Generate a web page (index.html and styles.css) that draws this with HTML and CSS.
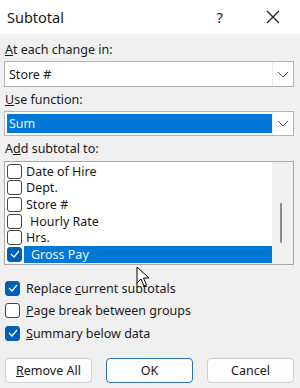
FILE: index.html
```html
<!doctype html>
<html lang="en">
  <head>
    <meta charset="UTF-8" />
    <title>Subtotal</title>
    <link rel="stylesheet" href="styles.css">
  </head>
  <body>
    <div class="dialog">
      <div class="titlebar">
        <span class="title">Subtotal</span>
        <span class="help">?</span>
        <svg class="close" width="14" height="14" viewBox="0 0 14 14">
          <path d="M1 1 L13 13 M13 1 L1 13" stroke="#222" stroke-width="1.3" fill="none" />
        </svg>
      </div>

      <div class="content">
        <div class="label first"><u>A</u>t each change in:</div>
        <div class="combo combo-one">
          <span class="combo-text">Store #</span>
          <span class="arrow">
            <svg width="12" height="7" viewBox="0 0 12 7"><path d="M1 1 L6 6 L11 1" stroke="#555" stroke-width="1" fill="none" /></svg>
          </span>
        </div>

        <div class="label"><u>U</u>se function:</div>
        <div class="combo combo-two">
          <span class="combo-text selected">Sum</span>
          <span class="arrow">
            <svg width="12" height="7" viewBox="0 0 12 7"><path d="M1 1 L6 6 L11 1" stroke="#555" stroke-width="1" fill="none" /></svg>
          </span>
        </div>

        <div class="label">A<u>d</u>d subtotal to:</div>
        <div class="listbox">
          <div class="items">
            <div class="item"><span class="box"></span><span>Date of Hire</span></div>
            <div class="item"><span class="box"></span><span>Dept.</span></div>
            <div class="item"><span class="box"></span><span>Store #</span></div>
            <div class="item"><span class="box"></span><span class="pad">Hourly Rate</span></div>
            <div class="item"><span class="box"></span><span>Hrs.</span></div>
            <div class="item active">
              <span class="box checked">
                <svg width="10" height="8" viewBox="0 0 10 8"><path d="M1 4 L4 7 L9 1" stroke="#fff" stroke-width="1.2" fill="none" /></svg>
              </span>
              <span class="sel">Gross Pay</span>
            </div>
          </div>
          <div class="scroll"><div class="thumb"></div></div>
        </div>

        <div class="checks">
          <div class="check">
            <span class="box checked">
              <svg width="10" height="8" viewBox="0 0 10 8"><path d="M1 4 L4 7 L9 1" stroke="#fff" stroke-width="1.2" fill="none" /></svg>
            </span>
            <span>Replace <u>c</u>urrent subtotals</span>
          </div>
          <div class="check">
            <span class="box"></span>
            <span><u>P</u>age break between groups</span>
          </div>
          <div class="check">
            <span class="box checked">
              <svg width="10" height="8" viewBox="0 0 10 8"><path d="M1 4 L4 7 L9 1" stroke="#fff" stroke-width="1.2" fill="none" /></svg>
            </span>
            <span><u>S</u>ummary below data</span>
          </div>
        </div>

        <div class="buttons">
          <button class="btn"><u>R</u>emove All</button>
          <button class="btn default">OK</button>
          <button class="btn">Cancel</button>
        </div>
      </div>

      <svg class="cursor" width="14" height="21" viewBox="0 0 14 21">
        <path d="M1 1 L1 17 L5 13 L8 20 L10.5 19 L7.5 12 L13 12 Z" fill="#fff" stroke="#000" stroke-width="1" stroke-linejoin="round" />
      </svg>
    </div>
  </body>
</html>
```

FILE: styles.css
```css
body {
  margin: 0;
  font-family: "Noto Sans", "Open Sans", Arial, sans-serif;
  font-size: 12.5px;
  color: #1a1a1a;
  background: #f0f0f0;
}
.dialog {
  position: relative;
  width: 300px;
  height: 388px;
  background: #f0f0f0;
  overflow: hidden;
}
.titlebar {
  height: 34px;
  background: #fff;
  display: flex;
  align-items: center;
  padding: 0 0 0 7px;
}
.title {
  font-size: 14.5px;
  flex: 1;
}
.help {
  font-size: 15px;
  margin-right: 43px;
}
.close {
  margin-right: 20px;
}
.content {
  padding: 0 6px 0 4px;
}
.label {
  height: 16px;
  line-height: 16px;
  margin-top: 5px;
  padding-left: 1px;
}
.label.first {
  margin-top: 8px;
}
.combo {
  display: flex;
  align-items: stretch;
  background: #fff;
  border: 1px solid #b4b4b4;
  margin-top: 3px;
}
.combo-one {
  height: 24px;
}
.combo-two {
  height: 23px;
}
.combo-text {
  flex: 1;
  display: flex;
  align-items: center;
  padding-left: 4px;
}
.combo-two .combo-text {
  margin: 2px 0 2px 2px;
  padding-left: 2px;
}
.selected {
  background: #0078d7;
  color: #e8f4ff;
}
.arrow {
  width: 20px;
  border-left: 1px solid #ececec;
  display: flex;
  align-items: center;
  justify-content: center;
}
.listbox {
  display: flex;
  height: 102px;
  margin-top: 4px;
  background: #fff;
  border: 1px solid #a8a8a8;
}
.items {
  flex: 1;
  padding: 1px 0 0 2px;
}
.item {
  display: flex;
  align-items: center;
  height: 16.6px;
}
.item .box {
  margin-right: 4px;
}
.box {
  width: 13px;
  height: 13px;
  border: 1px solid #444;
  border-radius: 3px;
  background: #fff;
  display: flex;
  align-items: center;
  justify-content: center;
  flex-shrink: 0;
}
.box.checked {
  background: #005fb8;
  border-color: #005fb8;
}
.pad {
  padding-left: 4px;
}
.sel {
  flex: 1;
  background: #0078d7;
  color: #e8f4ff;
  height: 100%;
  display: flex;
  align-items: center;
  padding-left: 7px;
  margin-left: -2px;
}
.scroll {
  width: 21px;
  background: #f0f0f0;
  position: relative;
}
.thumb {
  position: absolute;
  left: 8px;
  top: 41px;
  width: 2px;
  height: 40px;
  background: #8a8a8a;
  border-radius: 1px;
}
.checks {
  margin-top: 12px;
  padding-left: 1px;
}
.check {
  display: flex;
  align-items: center;
  height: 22.5px;
}
.check .box {
  margin-right: 6px;
}
.buttons {
  display: flex;
  justify-content: space-between;
  margin-top: 13px;
  padding-left: 1px;
}
.btn {
  width: 87px;
  height: 25px;
  font-family: inherit;
  font-size: 12.5px;
  color: #1a1a1a;
  background: #fdfdfd;
  border: 1px solid #d0d0d0;
  border-radius: 4px;
}
.btn.default {
  border: 1.5px solid #2a72b8;
}
.cursor {
  position: absolute;
  left: 136px;
  top: 266px;
}
```
